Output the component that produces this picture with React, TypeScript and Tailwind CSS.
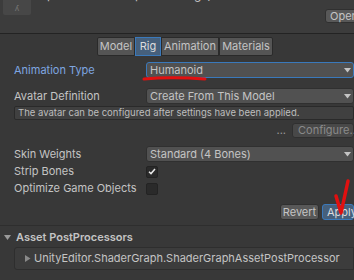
const Caret = () => (
  <svg width="7" height="5" viewBox="0 0 7 5" className="shrink-0">
    <path d="M0 0 L7 0 L3.5 4.5 Z" fill="#c4c4c4" />
  </svg>
);

const Dropdown = ({ value, focused }: { value: string; focused?: boolean }) => (
  <div
    className={
      "flex h-[16px] flex-1 items-center justify-between rounded-[3px] border pl-[3px] pr-[2px] " +
      (focused ? "border-[#3a79bb] bg-[#515151]" : "border-[#303030] bg-[#515151]")
    }
  >
    <span>{value}</span>
    <Caret />
  </div>
);

const Row = ({ label, children, blue }: { label: string; children: React.ReactNode; blue?: boolean }) => (
  <div className="flex items-center pl-[14px]">
    <div className={"w-[132px] shrink-0 " + (blue ? "text-[#7ea6e0]" : "")}>{label}</div>
    {children}
  </div>
);

const Checkbox = ({ checked }: { checked?: boolean }) => (
  <div className="flex h-[12px] w-[12px] items-center justify-center rounded-[2px] border border-[#232323] bg-[#2a2a2a]">
    {checked && (
      <svg width="8" height="7" viewBox="0 0 8 7">
        <path d="M1 3.8 L3 5.6 L7 1" stroke="#e8e8e8" strokeWidth="1.5" fill="none" />
      </svg>
    )}
  </div>
);

export default function App() {
  return (
    <div className="relative h-[280px] w-[354px] overflow-hidden bg-[#383838] text-[11px] leading-none text-[#c4c4c4] [font-family:Inter,'Noto_Sans',sans-serif]">
      {/* header */}
      <div className="relative h-[34px] overflow-hidden border-b border-[#232323] bg-[#3c3c3c]">
        <div className="absolute left-[3px] top-0 flex h-[15px] w-[28px] items-center justify-center rounded-b-[2px] bg-[#474747]">
          <span className="text-[8px] text-[#777]">ʎ</span>
        </div>
        <div className="absolute left-[40px] top-[-11px] text-[12px] text-[#c4c4c4]">Tpose (Model Import Settings)</div>
        <div className="absolute left-[325px] top-[9px] flex h-[14px] w-[40px] items-center rounded-[3px] border border-[#303030] bg-[#585858] pl-[4px] text-[11px]">
          Open
        </div>
      </div>

      {/* tabs */}
      <div className="mt-[3px] flex h-[19px] pl-[97px]">
        <div className="flex w-[38px] items-center justify-center rounded-l-[2px] border border-[#2a2a2a] bg-[#555555]">Model</div>
        <div className="flex w-[26px] items-center justify-center border border-[#3a79bb] bg-[#46607c] text-[#dcdcdc]">Rig</div>
        <div className="flex w-[58px] items-center justify-center border border-[#2a2a2a] bg-[#555555]">Animation</div>
        <div className="flex w-[54px] items-center justify-center rounded-r-[2px] border border-[#2a2a2a] bg-[#555555]">Materials</div>
      </div>

      {/* settings */}
      <div className="mt-[6px] flex flex-col">
        <Row label="Animation Type" blue>
          <Dropdown value="Humanoid" focused />
        </Row>
        <div className="mt-[10px]">
          <Row label="Avatar Definition">
            <Dropdown value="Create From This Model" />
          </Row>
        </div>
        <div className="ml-[14px] mt-[2px] flex h-[14px] items-center rounded-[2px] border border-[#2a2a2a] bg-[#404040] pl-[3px] text-[9.5px] text-[#bdbdbd]">
          The avatar can be configured after settings have been applied.
        </div>
        <div className="mt-[3px] flex h-[15px] items-center justify-end gap-[6px]">
          <span className="text-[#9a9a9a]">...</span>
          <div className="flex h-[15px] w-[62px] items-center rounded-[3px] border border-[#303030] bg-[#484848] pl-[5px] text-[#8a8a8a]">
            Configure...
          </div>
        </div>
        <div className="mt-[8px]">
          <Row label="Skin Weights">
            <Dropdown value="Standard (4 Bones)" />
          </Row>
        </div>
        <div className="mt-[2px] flex h-[15px] items-center pl-[14px]">
          <div className="w-[132px]">Strip Bones</div>
          <Checkbox checked />
        </div>
        <div className="mt-[2px] flex h-[15px] items-center pl-[14px]">
          <div className="w-[132px]">Optimize Game Objects</div>
          <Checkbox />
        </div>
        <div className="mt-[8px] flex h-[16px] justify-end gap-[3px]">
          <div className="flex w-[39px] items-center justify-center rounded-[3px] border border-[#303030] bg-[#585858]">Revert</div>
          <div className="flex w-[32px] items-center rounded-[3px] border border-[#3a79bb] bg-[#46607c] pl-[4px] text-[#dcdcdc]">Apply</div>
        </div>
      </div>

      {/* post processors */}
      <div className="mt-[5px] border-t border-[#2e2e2e] pt-[6px]">
        <div className="flex items-center gap-[5px] pl-[4px] font-semibold">
          <svg width="7" height="6" viewBox="0 0 7 6">
            <path d="M0 0 L7 0 L3.5 5 Z" fill="#9a9a9a" />
          </svg>
          <span>Asset PostProcessors</span>
        </div>
        <div className="ml-[14px] mt-[4px] flex h-[23px] items-center gap-[3px] rounded-l-[3px] border border-[#2e2e2e] bg-[#3c3c3c] pl-[10px]">
          <svg width="6" height="7" viewBox="0 0 6 7">
            <path d="M0 0 L5.5 3.5 L0 7 Z" fill="#8a8a8a" />
          </svg>
          <span>UnityEditor.ShaderGraph.ShaderGraphAssetPostProcessor</span>
        </div>
      </div>

      {/* red annotations */}
      <svg className="pointer-events-none absolute left-0 top-0" width="354" height="280">
        <path d="M144 79 C160 77.5 185 77.5 205 79" stroke="#e01010" strokeWidth="3" fill="none" strokeLinecap="round" />
        <path d="M336 196 L341 213 L348 181" stroke="#e01010" strokeWidth="3.5" fill="none" strokeLinecap="round" strokeLinejoin="round" />
      </svg>
    </div>
  );
}
